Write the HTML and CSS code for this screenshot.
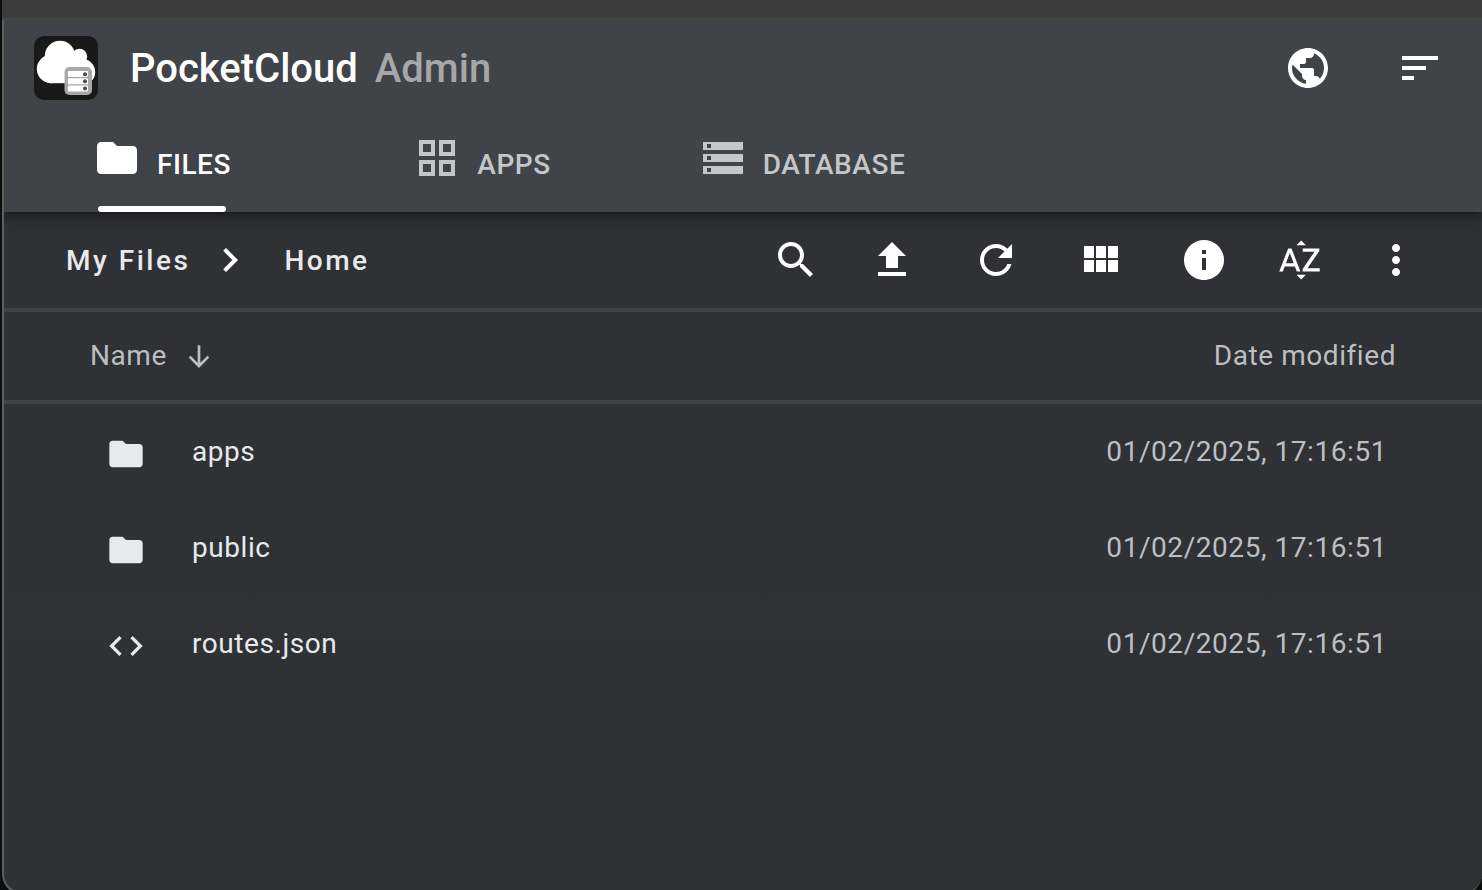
FILE: index.html
```html
<!DOCTYPE html>
<html lang="en">
<head>
<meta charset="utf-8">
<title>PocketCloud Admin</title>
<link rel="stylesheet" href="styles.css">
</head>
<body>
<div class="window">
  <div class="titlebar"></div>
  <header class="header">
    <div class="brand-row">
      <svg class="logo" viewBox="0 0 64 64" aria-hidden="true">
        <rect width="64" height="64" rx="10" fill="#191919"/>
        <g fill="#fff">
          <circle cx="17" cy="33" r="14.200"/>
          <circle cx="26" cy="20" r="15.200"/>
          <circle cx="45.500" cy="20.500" r="7.700"/>
          <circle cx="48" cy="36" r="13.200"/>
          <path d="M17 20h29v27.200H17z"/>
        </g>
        <rect x="30.500" y="31" width="27.500" height="28" rx="5" fill="#a9a9a9"/>
        <g fill="#fff">
          <rect x="34" y="35" width="20" height="6" rx="1"/>
          <rect x="34" y="42.300" width="20" height="6" rx="1"/>
          <rect x="34" y="49.500" width="20" height="6" rx="1"/>
        </g>
        <g fill="#4a4a4a">
          <circle cx="51" cy="38.200" r="2"/>
          <circle cx="51" cy="45.300" r="2"/>
          <circle cx="51" cy="52.500" r="2"/>
        </g>
      </svg>
      <h1 class="brand">PocketCloud <span class="brand-sub">Admin</span></h1>
      <div class="brand-actions">
        <button class="icon-btn" aria-label="Open site"><svg class="icon" viewBox="0 0 24 24"><path d="M12 2C6.480 2 2 6.480 2 12s4.480 10 10 10 10-4.480 10-10S17.520 2 12 2zm-1 17.930c-3.950-.49-7-3.850-7-7.930 0-.62.080-1.210.21-1.790L9 15v1c0 1.100.9 2 2 2v1.930zm6.900-2.540c-.26-.81-1-1.390-1.900-1.390h-1v-3c0-.55-.45-1-1-1H8v-2h2c.55 0 1-.45 1-1V7h2c1.100 0 2-.9 2-2v-.41c2.930 1.190 5 4.060 5 7.410 0 2.080-.8 3.970-2.100 5.390z"/></svg></button>
        <button class="icon-btn" aria-label="Menu"><svg class="icon" viewBox="0 0 24 24"><path d="M3 18h6v-2H3v2zM3 6v2h18V6H3zm0 7h12v-2H3v2z"/></svg></button>
      </div>
    </div>
    <nav class="tabs">
      <a class="tab tab-active" href="#files"><svg class="icon" viewBox="0 0 24 24"><path d="M10 4H4c-1.100 0-1.990.9-1.990 2L2 18c0 1.100.9 2 2 2h16c1.100 0 2-.9 2-2V8c0-1.100-.9-2-2-2h-8l-2-2z"/></svg><span class="tab-label">FILES</span></a>
      <a class="tab" href="#apps"><svg class="icon" viewBox="0 0 24 24"><path d="M3 3v8h8V3H3zm6 6H5V5h4v4zm-6 4v8h8v-8H3zm6 6H5v-4h4v4zm4-16v8h8V3h-8zm6 6h-4V5h4v4zm-6 4v8h8v-8h-8zm6 6h-4v-4h4v4z"/></svg><span class="tab-label">APPS</span></a>
      <a class="tab" href="#database"><svg class="icon" viewBox="0 0 24 24"><path d="M2 20h20v-4H2v4zm2-3h2v2H4v-2zM2 4v4h20V4H2zm4 3H4V5h2v2zm-4 7h20v-4H2v4zm2-3h2v2H4v-2z"/></svg><span class="tab-label">DATABASE</span></a>
    </nav>
  </header>
  <main class="content">
    <div class="toolbar">
      <nav class="crumbs" aria-label="Path">
        <a class="crumb" href="#my-files">My Files</a>
        <svg class="icon crumb-sep" viewBox="0 0 24 24"><path d="M10 6 8.590 7.410 13.170 12l-4.580 4.590L10 18l6-6z"/></svg>
        <a class="crumb" href="#home">Home</a>
      </nav>
      <div class="tools">
        <div class="tool-group">
          <button class="icon-btn" aria-label="Search"><svg class="icon" viewBox="0 0 24 24"><path d="M15.500 14h-.79l-.28-.27C15.410 12.590 16 11.110 16 9.500 16 5.910 13.090 3 9.500 3S3 5.910 3 9.500 5.910 16 9.500 16c1.610 0 3.090-.59 4.230-1.570l.27.28v.79l5 4.990L20.490 19l-4.990-5zm-6 0C7.010 14 5 11.990 5 9.500S7.010 5 9.500 5 14 7.010 14 9.500 11.990 14 9.500 14z"/></svg></button>
          <button class="icon-btn" aria-label="Upload"><svg class="icon" viewBox="0 0 24 24"><path d="M9 16h6v-6h4l-7-7-7 7h4zm-4 2h14v2H5z"/></svg></button>
        </div>
        <button class="icon-btn" aria-label="Refresh"><svg class="icon" viewBox="0 0 24 24"><path d="M17.650 6.350C16.200 4.900 14.210 4 12 4c-4.420 0-7.990 3.580-7.990 8s3.570 8 7.990 8c3.730 0 6.840-2.550 7.730-6h-2.080c-.82 2.330-3.040 4-5.650 4-3.310 0-6-2.690-6-6s2.690-6 6-6c1.660 0 3.140.69 4.220 1.780L13 11h7V4l-2.350 2.350z"/></svg></button>
        <button class="icon-btn" aria-label="Grid view"><svg class="icon" viewBox="0 0 24 24"><path d="M4 11h5V5H4v6zm0 7h5v-6H4v6zm6 0h5v-6h-5v6zm6 0h5v-6h-5v6zm-6-7h5V5h-5v6zm6-6v6h5V5h-5z"/></svg></button>
        <div class="tool-group">
          <button class="icon-btn" aria-label="Info"><svg class="icon" viewBox="0 0 24 24"><path d="M12 2C6.480 2 2 6.480 2 12s4.480 10 10 10 10-4.480 10-10S17.520 2 12 2zm1 15h-2v-6h2v6zm0-8h-2V7h2v2z"/></svg></button>
          <button class="icon-btn" aria-label="Sort by name"><svg class="icon" viewBox="0 0 24 24"><path d="M14.940 4.660h-4.720l2.360-2.360zm-4.690 14.710h4.660l-2.330 2.330zM6.100 6.270 1.600 17.730h1.840l.92-2.450h5.110l.92 2.450h1.840L7.740 6.270H6.100zm-1.130 7.370 1.940-5.180 1.940 5.180H4.970zm10.760 2.500h6.120v1.590h-8.530v-1.290l5.920-8.560h-5.880v-1.600h8.300v1.260l-5.930 8.600z"/></svg></button>
          <button class="icon-btn" aria-label="More"><svg class="icon" viewBox="0 0 24 24"><path d="M12 8c1.100 0 2-.9 2-2s-.9-2-2-2-2 .9-2 2 .9 2 2 2zm0 2c-1.100 0-2 .9-2 2s.9 2 2 2 2-.9 2-2-.9-2-2-2zm0 6c-1.100 0-2 .9-2 2s.9 2 2 2 2-.9 2-2-.9-2-2-2z"/></svg></button>
        </div>
      </div>
    </div>
    <table class="files">
      <thead>
        <tr>
          <th scope="col" class="col-name"><button class="sort-btn">Name <svg class="icon icon-sort" viewBox="0 0 24 24"><path d="M12 4v15M5 12.500l7 7 7-7"/></svg></button></th>
          <th scope="col" class="col-date">Date modified</th>
        </tr>
      </thead>
      <tbody>
        <tr>
          <td class="cell-name"><a class="file" href="#apps-folder"><svg class="icon icon-file" viewBox="0 0 24 24"><path d="M10 4H4c-1.100 0-1.990.9-1.990 2L2 18c0 1.100.9 2 2 2h16c1.100 0 2-.9 2-2V8c0-1.100-.9-2-2-2h-8l-2-2z"/></svg><span>apps</span></a></td>
          <td class="cell-date">01/02/2025, 17:16:51</td>
        </tr>
        <tr>
          <td class="cell-name"><a class="file" href="#public"><svg class="icon icon-file" viewBox="0 0 24 24"><path d="M10 4H4c-1.100 0-1.990.9-1.990 2L2 18c0 1.100.9 2 2 2h16c1.100 0 2-.9 2-2V8c0-1.100-.9-2-2-2h-8l-2-2z"/></svg><span>public</span></a></td>
          <td class="cell-date">01/02/2025, 17:16:51</td>
        </tr>
        <tr>
          <td class="cell-name"><a class="file" href="#routes"><svg class="icon icon-file" viewBox="0 0 24 24"><path d="M9.400 16.600 4.800 12l4.600-4.600L8 6l-6 6 6 6 1.400-1.400zm5.200 0 4.600-4.600-4.600-4.600L16 6l6 6-6 6-1.400-1.400z"/></svg><span>routes.json</span></a></td>
          <td class="cell-date">01/02/2025, 17:16:51</td>
        </tr>
      </tbody>
    </table>
  </main>
</div>
</body>
</html>
```
FILE: styles.css
```css
* {
  box-sizing: border-box;
}

body {
  margin: 0;
  padding-left: 2px;
  height: 100vh;
  overflow: hidden;
  background: #0c0d0d;
  color: #e8e9ed;
  font-family: Roboto, "Liberation Sans", sans-serif;
  font-size: 28px;
  line-height: 32px;
}

a {
  color: inherit;
  text-decoration: none;
}

button {
  padding: 0;
  border: 0;
  background: none;
  color: inherit;
  font: inherit;
  letter-spacing: inherit;
  cursor: pointer;
}

.window {
  position: relative;
  display: flex;
  flex-direction: column;
  min-height: calc(100vh + 4px);
  border-radius: 0 0 20px 20px;
  overflow: hidden;
  background: linear-gradient(#303135 60%, #2e3235 90%);
}

.window::after {
  content: "";
  position: absolute;
  inset: -2px -2px 0 0;
  border: 2px solid #5e6061;
  border-radius: 0 0 20px 20px;
  pointer-events: none;
}

.titlebar {
  position: relative;
  z-index: 1;
  height: 20px;
  background: #3c3c3c;
  border-bottom: 2px solid #444546;
}

.header {
  position: relative;
  background: #404347;
  box-shadow: 0 2px 12px 2px rgba(0, 0, 0, 0.5);
}

.brand-row {
  display: flex;
  align-items: center;
  gap: 32px;
  height: 96px;
  padding: 0 38px 0 32px;
}

.logo {
  width: 64px;
  height: 64px;
}

.brand {
  flex: 1;
  margin: 0;
  padding-top: 2px;
  color: #fff;
  font-size: 40px;
  font-weight: 500;
  line-height: 48px;
}

.brand-sub {
  margin-left: 7px;
  color: #a6a7a9;
}

.brand-actions {
  display: flex;
  gap: 64px;
  color: #fff;
}

.icon {
  display: block;
  flex: none;
  width: 48px;
  height: 48px;
  fill: currentColor;
}

.tabs {
  display: flex;
  height: 96px;
}

.tab {
  position: relative;
  display: flex;
  justify-content: center;
  gap: 16px;
  width: 320px;
  padding-top: 18px;
  color: #c5c6c8;
  font-weight: 500;
  letter-spacing: 0.02em;
}

.tab-label {
  padding-top: 15px;
}

.tab-active {
  color: #fff;
}

.tab-active::after {
  content: "";
  position: absolute;
  bottom: 0;
  width: 128px;
  height: 6px;
  border-radius: 3px;
  background: #fff;
}

.toolbar {
  display: flex;
  justify-content: space-between;
  align-items: center;
  height: 100px;
  padding: 0 62px 0 64px;
  border-bottom: 4px solid #404246;
}

.crumbs {
  display: flex;
  align-items: center;
  font-weight: 500;
  letter-spacing: 0.09em;
}

.crumb {
  padding-top: 2px;
}

.crumb-sep {
  margin: 0 30px 0 16px;
  color: #fff;
}

.tools {
  display: flex;
  gap: 56px;
  color: #fff;
}

.tool-group {
  display: flex;
  gap: 48px;
}

.files {
  width: 100%;
  border-collapse: separate;
  border-spacing: 0;
  letter-spacing: 0.02em;
}

.files th {
  height: 92px;
  padding: 0 86px 0 88px;
  border-bottom: 4px solid #404446;
  color: #bdbec2;
  font-weight: 400;
  text-align: left;
}

.files .col-date {
  text-align: right;
}

.sort-btn {
  display: flex;
  align-items: center;
  gap: 16px;
}

.icon-sort {
  width: 32px;
  height: 32px;
  fill: none;
  stroke: currentColor;
  stroke-width: 2;
}

.files td {
  height: 96px;
  padding: 0 95px 0 104px;
}

.file {
  display: flex;
  align-items: center;
  gap: 46px;
}

.icon-file {
  width: 40px;
  height: 40px;
  margin-top: 4px;
}

.files .cell-date {
  color: #bdbec2;
  text-align: right;
}
```
